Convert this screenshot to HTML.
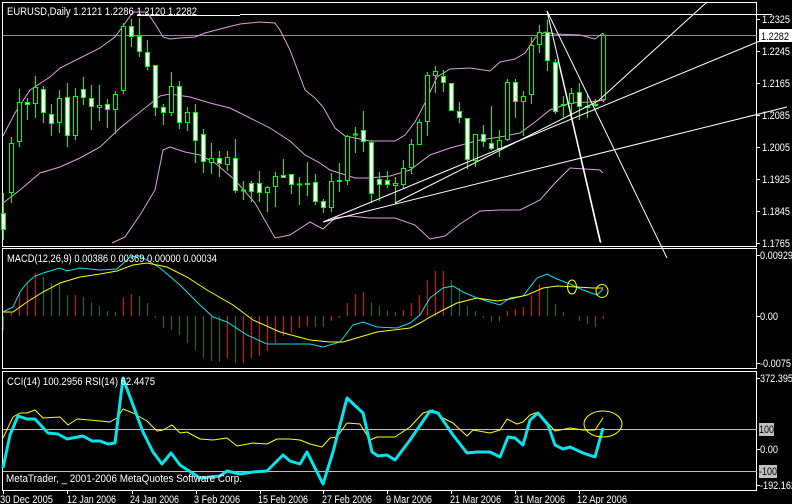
<!DOCTYPE html>
<html><head><meta charset="utf-8"><style>
html,body{margin:0;padding:0;background:#000;}
svg{display:block}
text{font-family:"Liberation Sans",sans-serif;font-size:11px;fill:#fff}
.g{fill:#000;stroke:#00ff00;stroke-width:1}
.w{fill:#fff;stroke:#00ff00;stroke-width:1}
</style></head><body>
<svg width="792" height="504" viewBox="0 0 792 504" xmlns="http://www.w3.org/2000/svg" shape-rendering="crispEdges">
<rect width="792" height="504" fill="#000"/>
<g fill="none" stroke="#fff" stroke-width="1">
<rect x="2.5" y="2.5" width="754" height="244"/>
<rect x="2.5" y="248.5" width="754" height="120"/>
<rect x="2.5" y="371.5" width="754" height="119"/>
</g>
<path stroke="#fff" d="M757 19.5h3M757 51.5h3M757 83.5h3M757 115.5h3M757 147.5h3M757 179.5h3M757 211.5h3M757 243.5h3M757 255.5h3M757 316.5h3M757 363.5h3M757 378.5h3M757 449.5h3M757 485.5h3M3.5 491v3M67.5 491v3M132.5 491v3M196.5 491v3M260.5 491v3M323.5 491v3M387.5 491v3M451.5 491v3M515.5 491v3M579.5 491v3"/>
<path stroke="#8a8f98" d="M3 35.5H757"/>
<path stroke="#fff" d="M137 15.5H240M240 14.5H772"/>
<g fill="none" stroke="#dda0dd" stroke-width="1" shape-rendering="auto">
<polyline points="3,136 15,113 30,90 50,77 60,68 80,58 100,48 115,37 123,26 133,12 147,12 157,27 163,37 170,39 180,38 195,37 205,33 220,29 240,24 260,22 275,23 280,30 290,50 305,90 315,98 323,107 335,128 345,136 370,141 395,141 405,135 415,122 425,103 437,77 450,69 470,68 490,71 500,62 515,59 525,53 535,38 545,32 555,34 580,35 595,39 603,33"/>
<polyline points="3,203 20,190 40,173 60,167 80,158 100,147 120,128 140,112 160,96 170,94 190,97 210,103 230,108 250,118 270,128 290,141 305,155 320,163 330,170 355,178 370,178 390,176 410,170 430,155 450,148 480,140 500,137 520,133 535,122 550,110 570,103 590,102 605,100"/>
<polyline points="112,243 125,237 140,215 155,190 163,150 170,147 185,152 200,155 215,163 235,180 255,203 275,238 290,235 310,222 323,229 335,218 350,216 370,218 395,218 415,225 430,239 445,236 460,224 480,211 500,210 520,210 540,200 555,183 570,168 585,169 600,170 603,173"/>
</g>
<path stroke="#00ff00" d="M3.5 193V240M11.5 137V203M19.5 89V147M27.5 98V120M35.5 76V118M43.5 86V123M51.5 104V136M59.5 90V133M67.5 83V147M75.5 88V140M83.5 77V105M91.5 85V130M99.5 85V121M107.5 99V128M115.5 91V134M123.5 23V94M131.5 19V47M139.5 18V57M147.5 40V70M155.5 65V116M163.5 104V125M171.5 72V116M179.5 81V129M187.5 107V131M195.5 104V163M203.5 129V173M211.5 143V174M219.5 151V177M227.5 151V171M235.5 139V193M243.5 181V200M251.5 181V202M259.5 171V202M267.5 186V212M275.5 172V207M283.5 159V178M291.5 174V194M299.5 177V205M307.5 162V196M315.5 174V205M323.5 199V213M331.5 173V212M339.5 163V192M347.5 135V185M355.5 127V153M363.5 111V152M371.5 140V203M379.5 172V201M387.5 171V188M395.5 177V204M403.5 160V188M411.5 139V174M419.5 119V145M427.5 72V136M435.5 66V93M443.5 70V92M451.5 83V111M459.5 102V123M467.5 118V169M475.5 134V167M483.5 125V147M491.5 106V150M499.5 130V157M507.5 79V141M515.5 79V118M523.5 91V136M531.5 37V104M539.5 25V53M547.5 20V71M555.5 59V114M563.5 96V117M571.5 88V116M579.5 83V120M587.5 94V118M595.5 99V107M603.5 33V102"/>
<g>
<rect class="w" x="1.5" y="213.5" width="4" height="16"/>
<rect class="g" x="9.5" y="143.5" width="4" height="49"/>
<rect class="g" x="17.5" y="102.5" width="4" height="39"/>
<rect class="w" x="25.5" y="102.5" width="4" height="2"/>
<rect class="g" x="33.5" y="87.5" width="4" height="16"/>
<rect class="w" x="41.5" y="89.5" width="4" height="23"/>
<rect class="w" x="49.5" y="114.5" width="4" height="9"/>
<rect class="g" x="57.5" y="98.5" width="4" height="24"/>
<rect class="w" x="65.5" y="97.5" width="4" height="38"/>
<rect class="g" x="73.5" y="96.5" width="4" height="39"/>
<rect class="w" x="81.5" y="89.5" width="4" height="8"/>
<rect class="w" x="89.5" y="98.5" width="4" height="8"/>
<rect class="g" x="97.5" y="105.5" width="4" height="2"/>
<rect class="w" x="105.5" y="104.5" width="4" height="5"/>
<rect class="g" x="113.5" y="94.5" width="4" height="15"/>
<rect class="g" x="121.5" y="26.5" width="4" height="64"/>
<rect class="w" x="129.5" y="26.5" width="4" height="10"/>
<rect class="w" x="137.5" y="36.5" width="4" height="15"/>
<rect class="w" x="145.5" y="52.5" width="4" height="14"/>
<rect class="w" x="153.5" y="65.5" width="4" height="42"/>
<rect class="w" x="161.5" y="107.5" width="4" height="5"/>
<rect class="g" x="169.5" y="86.5" width="4" height="26"/>
<rect class="w" x="177.5" y="86.5" width="4" height="36"/>
<rect class="g" x="185.5" y="112.5" width="4" height="10"/>
<rect class="w" x="193.5" y="112.5" width="4" height="28"/>
<rect class="w" x="201.5" y="134.5" width="4" height="27"/>
<rect class="g" x="209.5" y="158.5" width="4" height="4"/>
<rect class="w" x="217.5" y="158.5" width="4" height="5"/>
<rect class="g" x="225.5" y="157.5" width="4" height="7"/>
<rect class="w" x="233.5" y="158.5" width="4" height="32"/>
<rect class="g" x="241.5" y="190" width="4" height="1"/>
<rect class="w" x="249.5" y="183.5" width="4" height="8"/>
<rect class="w" x="257.5" y="183.5" width="4" height="9"/>
<rect class="g" x="265.5" y="187.5" width="4" height="5"/>
<rect class="g" x="273.5" y="176.5" width="4" height="10"/>
<rect class="w" x="281.5" y="175.5" width="4" height="2"/>
<rect class="w" x="289.5" y="174.5" width="4" height="10"/>
<rect class="g" x="297.5" y="184" width="4" height="1"/>
<rect class="w" x="305.5" y="183.5" width="4" height="1"/>
<rect class="w" x="313.5" y="182.5" width="4" height="19"/>
<rect class="w" x="321.5" y="201.5" width="4" height="6"/>
<rect class="g" x="329.5" y="181.5" width="4" height="26"/>
<rect class="g" x="337.5" y="180.5" width="4" height="1"/>
<rect class="g" x="345.5" y="136.5" width="4" height="44"/>
<rect class="g" x="353.5" y="134" width="4" height="1"/>
<rect class="w" x="361.5" y="130.5" width="4" height="11"/>
<rect class="w" x="369.5" y="142.5" width="4" height="51"/>
<rect class="w" x="377.5" y="179.5" width="4" height="5"/>
<rect class="w" x="385.5" y="180.5" width="4" height="4"/>
<rect class="g" x="393.5" y="183.5" width="4" height="2"/>
<rect class="g" x="401.5" y="168.5" width="4" height="16"/>
<rect class="g" x="409.5" y="144.5" width="4" height="23"/>
<rect class="g" x="417.5" y="122.5" width="4" height="22"/>
<rect class="g" x="425.5" y="75.5" width="4" height="46"/>
<rect class="g" x="433.5" y="71.5" width="4" height="4"/>
<rect class="w" x="441.5" y="76.5" width="4" height="6"/>
<rect class="w" x="449.5" y="83.5" width="4" height="27"/>
<rect class="w" x="457.5" y="111.5" width="4" height="6"/>
<rect class="w" x="465.5" y="118.5" width="4" height="41"/>
<rect class="g" x="473.5" y="134.5" width="4" height="26"/>
<rect class="w" x="481.5" y="134.5" width="4" height="7"/>
<rect class="w" x="489.5" y="143.5" width="4" height="5"/>
<rect class="g" x="497.5" y="140.5" width="4" height="8"/>
<rect class="g" x="505.5" y="82.5" width="4" height="57"/>
<rect class="w" x="513.5" y="82.5" width="4" height="19"/>
<rect class="g" x="521.5" y="96.5" width="4" height="5"/>
<rect class="g" x="529.5" y="45.5" width="4" height="49"/>
<rect class="g" x="537.5" y="32.5" width="4" height="12"/>
<rect class="w" x="545.5" y="32.5" width="4" height="28"/>
<rect class="w" x="553.5" y="62.5" width="4" height="49"/>
<rect class="w" x="561.5" y="104.5" width="4" height="1"/>
<rect class="g" x="569.5" y="93.5" width="4" height="10"/>
<rect class="w" x="577.5" y="92.5" width="4" height="14"/>
<rect class="w" x="585.5" y="106.5" width="4" height="1"/>
<rect class="g" x="593.5" y="104.5" width="4" height="1"/>
<rect class="g" x="601.5" y="35.5" width="4" height="64"/>
</g>
<g stroke="#fff" stroke-width="1" fill="none" shape-rendering="auto">
<line x1="323" y1="222" x2="767" y2="38"/>
<line x1="323" y1="222" x2="787" y2="107"/>
<line x1="395" y1="203" x2="598" y2="101"/>
<line x1="598" y1="101" x2="707" y2="2"/>
<line x1="547" y1="11" x2="601" y2="243"/>
<line x1="547" y1="11" x2="667" y2="258"/>
<line x1="558" y1="60" x2="600" y2="242"/>
</g>
<path stroke="#ff0000" d="M11.5 316V312M19.5 316V292M27.5 316V282M35.5 316V273M75.5 316V295M123.5 316V298M131.5 316V294M227.5 316V358M243.5 316V363M251.5 316V358M259.5 316V356M267.5 316V351M275.5 316V343M283.5 316V336M291.5 316V333M299.5 316V328M307.5 316V326M331.5 316V321M339.5 316V318M347.5 316V303M355.5 316V294M363.5 316V292M403.5 316V310M411.5 316V303M419.5 316V295M427.5 316V280M435.5 316V271M443.5 316V271M507.5 316V311M515.5 316V309M523.5 316V307M531.5 316V295M539.5 316V284M603.5 316V319"/>
<path stroke="#008000" d="M3.5 316V330M43.5 316V277M51.5 316V283M59.5 316V285M67.5 316V295M83.5 316V297M91.5 316V302M99.5 316V306M107.5 316V311M115.5 316V312M139.5 316V296M147.5 316V303M155.5 316V318M163.5 316V328M171.5 316V330M179.5 316V335M187.5 316V343M195.5 316V350M203.5 316V358M211.5 316V361M219.5 316V362M235.5 316V363M315.5 316V327M323.5 316V327M371.5 316V302M379.5 316V306M387.5 316V310M395.5 316V312M451.5 316V280M459.5 316V288M467.5 316V306M475.5 316V311M483.5 316V318M491.5 316V322M499.5 316V322M547.5 316V288M555.5 316V304M563.5 316V312M579.5 316V321M587.5 316V324M595.5 316V327"/>
<g fill="none" stroke-width="1" shape-rendering="auto">
<polyline stroke="#00e5ee" points="3,312 13,307 20,292 27,283 35,276 43,273 60,268 67,271 80,268 100,270 117,269 130,257 140,256 147,260 160,268 180,285 200,305 213,317 227,322 247,335 267,344 293,344 310,344 323,347 340,342 353,325 363,322 377,327 397,328 410,323 420,315 430,298 443,288 453,286 463,292 477,298 490,302 500,305 510,298 523,296 537,278 547,274 557,279 570,284 583,290 597,295 603,289"/>
<polyline stroke="#ffff00" points="3,312 13,312 27,302 43,292 60,283 80,277 100,274 117,271 133,265 147,263 167,267 187,277 207,290 233,305 253,320 280,332 310,340 330,342 343,342 360,337 377,332 410,328 420,323 430,317 443,310 457,303 477,298 497,301 510,299 527,295 543,288 557,286 577,287 593,288 603,288"/>
<ellipse cx="572" cy="287" rx="4.5" ry="7" stroke="#ffff00"/>
<ellipse cx="602" cy="291" rx="6" ry="6.5" stroke="#ffff00"/>
</g>
<path stroke="#c0c0c0" d="M3 429.5H757M3 471.5H757"/>
<g fill="none" shape-rendering="auto" stroke-linejoin="round">
<polyline stroke="#ffff00" stroke-width="1" points="3,438 13,417 20,413 27,413 35,410 43,418 60,417 68,425 77,419 90,420 110,422 117,418 123,409 133,413 147,421 157,431 163,430 172,425 180,433 187,432 200,439 213,440 227,438 237,446 253,443 267,444 277,439 290,439 300,440 310,444 322,447 330,438 337,437 347,423 360,424 370,440 377,437 395,437 410,427 423,413 433,410 443,418 453,423 467,436 473,430 490,433 500,430 507,419 517,424 523,422 530,415 538,412 547,422 555,431 570,428 583,430 595,430 603,418"/>
<polyline stroke="#00e5ee" stroke-width="3" points="3,468 10,435 18,416 27,419 35,419 48,433 58,434 67,439 83,436 92,441 100,441 108,444 115,443 123,378 133,405 143,432 153,452 162,464 171,453 180,465 200,478 220,476 227,471 240,474 253,472 267,471 283,455 290,461 300,464 307,452 310,458 323,484 333,452 347,398 363,413 372,452 378,456 387,455 395,460 410,440 430,411 438,413 453,435 467,453 477,452 490,452 500,457 508,437 515,438 523,445 530,420 538,413 548,425 555,445 563,449 570,447 583,453 595,457 603,428"/>
<ellipse cx="603" cy="424" rx="19" ry="13" stroke="#ffff00" stroke-width="1"/>
</g>
<text x="7" y="15" textLength="190" lengthAdjust="spacingAndGlyphs">EURUSD,Daily  1.2121 1.2286 1.2120 1.2282</text>
<text x="7" y="262" textLength="210" lengthAdjust="spacingAndGlyphs">MACD(12,26,9) 0.00386 0.00369 0.00000 0.00034</text>
<text x="7" y="385" textLength="148" lengthAdjust="spacingAndGlyphs">CCI(14) 100.2956  RSI(14) 62.4475</text>
<text x="6" y="482" textLength="236" lengthAdjust="spacingAndGlyphs">MetaTrader, _ 2001-2006 MetaQuotes Software Corp.</text>
<g>
<text x="762" y="23" textLength="28" lengthAdjust="spacingAndGlyphs">1.2325</text>
<rect x="759" y="29" width="33" height="13" fill="#fff"/>
<text x="761" y="40" style="fill:#000" textLength="28" lengthAdjust="spacingAndGlyphs">1.2282</text>
<text x="762" y="55" textLength="28" lengthAdjust="spacingAndGlyphs">1.2245</text>
<text x="762" y="87" textLength="28" lengthAdjust="spacingAndGlyphs">1.2165</text>
<text x="762" y="119" textLength="28" lengthAdjust="spacingAndGlyphs">1.2085</text>
<text x="762" y="151" textLength="28" lengthAdjust="spacingAndGlyphs">1.2005</text>
<text x="762" y="183" textLength="28" lengthAdjust="spacingAndGlyphs">1.1925</text>
<text x="762" y="215" textLength="28" lengthAdjust="spacingAndGlyphs">1.1845</text>
<text x="762" y="247" textLength="28" lengthAdjust="spacingAndGlyphs">1.1765</text>
<text x="760" y="259" textLength="33" lengthAdjust="spacingAndGlyphs">0.00929</text>
<text x="760" y="320" textLength="18" lengthAdjust="spacingAndGlyphs">0.00</text>
<text x="760" y="367" textLength="31" lengthAdjust="spacingAndGlyphs">-0.0075</text>
<text x="760" y="382" textLength="33" lengthAdjust="spacingAndGlyphs">372.395</text>
<rect x="759" y="423" width="15" height="13" fill="#c0c0c0"/>
<text x="759" y="433" style="fill:#000" textLength="15" lengthAdjust="spacingAndGlyphs">100</text>
<text x="760" y="453" textLength="18" lengthAdjust="spacingAndGlyphs">0.00</text>
<rect x="759" y="465" width="18" height="13" fill="#c0c0c0"/>
<text x="759" y="475" style="fill:#000" textLength="18" lengthAdjust="spacingAndGlyphs">-100</text>
<text x="760" y="489" textLength="36" lengthAdjust="spacingAndGlyphs">-192.162</text>
</g>
<g>
<text x="0" y="503" textLength="53" lengthAdjust="spacingAndGlyphs">30 Dec 2005</text>
<text x="67" y="503" textLength="49" lengthAdjust="spacingAndGlyphs">12 Jan 2006</text>
<text x="130" y="503" textLength="49" lengthAdjust="spacingAndGlyphs">24 Jan 2006</text>
<text x="194" y="503" textLength="46" lengthAdjust="spacingAndGlyphs">3 Feb 2006</text>
<text x="258" y="503" textLength="50" lengthAdjust="spacingAndGlyphs">15 Feb 2006</text>
<text x="322" y="503" textLength="50" lengthAdjust="spacingAndGlyphs">27 Feb 2006</text>
<text x="386" y="503" textLength="46" lengthAdjust="spacingAndGlyphs">9 Mar 2006</text>
<text x="450" y="503" textLength="51" lengthAdjust="spacingAndGlyphs">21 Mar 2006</text>
<text x="514" y="503" textLength="51" lengthAdjust="spacingAndGlyphs">31 Mar 2006</text>
<text x="577" y="503" textLength="50" lengthAdjust="spacingAndGlyphs">12 Apr 2006</text>
</g>
</svg>
</body></html>
